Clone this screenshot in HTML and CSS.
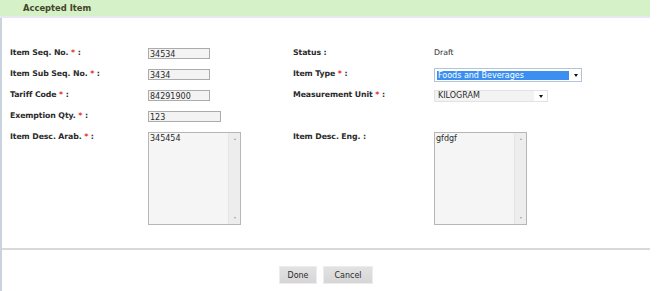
FILE: index.html
```html
<!DOCTYPE html>
<html>
<head>
<meta charset="utf-8">
<link rel="stylesheet" href="styles.css">
</head>
<body>
<div class="page">
  <div class="panel-head">Accepted Item</div>
  <div class="panel-body">
    <div class="form-grid">
      <div class="lbl">Item Seq. No. <span class="req">*</span> :</div>
      <div class="fld"><div class="inp">34534</div></div>
      <div class="lbl">Status :</div>
      <div class="fld"><div class="txt">Draft</div></div>

      <div class="lbl">Item Sub Seq. No. <span class="req">*</span> :</div>
      <div class="fld"><div class="inp">3434</div></div>
      <div class="lbl">Item Type <span class="req">*</span> :</div>
      <div class="fld"><div class="sel sel-type"><span class="sel-hl">Foods and Beverages</span><span class="caret"></span></div></div>

      <div class="lbl">Tariff Code <span class="req">*</span> :</div>
      <div class="fld"><div class="inp">84291900</div></div>
      <div class="lbl">Measurement Unit <span class="req">*</span> :</div>
      <div class="fld"><div class="sel sel-unit"><span class="sel-val">KILOGRAM</span><span class="sel-btn"><span class="caret"></span></span></div></div>

      <div class="lbl">Exemption Qty. <span class="req">*</span> :</div>
      <div class="fld"><div class="inp inp-wide">123</div></div>
      <div class="lbl"></div>
      <div class="fld"></div>

      <div class="lbl">Item Desc. Arab. <span class="req">*</span> :</div>
      <div class="fld">
        <div class="memo"><div class="memo-text">345454</div><div class="memo-bar"><span class="arr-up"></span><span class="arr-dn"></span></div></div>
      </div>
      <div class="lbl">Item Desc. Eng. :</div>
      <div class="fld">
        <div class="memo"><div class="memo-text">gfdgf</div><div class="memo-bar"><span class="arr-up"></span><span class="arr-dn"></span></div></div>
      </div>
    </div>
    <div class="divider"></div>
    <div class="actions">
      <button class="btn btn-done" type="button">Done</button>
      <button class="btn btn-cancel" type="button">Cancel</button>
    </div>
  </div>
</div>
</body>
</html>
```
FILE: styles.css
```css
html, body {
  margin: 0;
  padding: 0;
  background: #ffffff;
}
body {
  font-family: "DejaVu Sans", Verdana, sans-serif;
  color: #333333;
  overflow: hidden;
}
.page {
  width: 650px;
  height: 291px;
  display: flex;
  flex-direction: column;
}
.panel-head {
  height: 16px;
  background: #d5f1c7;
  border-bottom: 2px solid #e8e7f3;
  padding-left: 23px;
  font-size: 8.4px;
  font-weight: bold;
  line-height: 17px;
  color: #45452a;
}
.panel-body {
  flex: 1;
  border-left: 2px solid #c8d3de;
  display: flex;
  flex-direction: column;
}
.form-grid {
  display: grid;
  grid-template-columns: 138px 145px 141px 1fr;
  grid-template-rows: 21px 21px 21px 21px auto;
  padding: 30px 0 0 8px;
}
.lbl {
  font-size: 7.8px;
  font-weight: bold;
  line-height: 9px;
  letter-spacing: -0.1px;
  color: #2b2b2b;
  white-space: nowrap;
}
.req {
  color: #e81c1c;
}
.fld {
  display: flex;
  align-items: flex-start;
}
.txt {
  font-size: 7.8px;
  line-height: 9px;
  color: #2b2b2b;
}
.inp {
  box-sizing: border-box;
  width: 62px;
  height: 11px;
  border: 1px solid #ababab;
  background: #f3f3f3;
  font-size: 8px;
  line-height: 11px;
  padding-left: 1px;
  color: #2b2b2b;
  overflow: hidden;
}
.inp-wide {
  width: 73px;
}
.sel {
  box-sizing: border-box;
  display: flex;
  align-items: center;
  font-size: 8px;
}
.sel-type {
  width: 148px;
  height: 14px;
  margin-top: -1px;
  border: 1px solid #b4c4d8;
  background: #ffffff;
  padding: 0 0 0 2px;
}
.sel-hl {
  width: 131px;
  height: 9px;
  background: #3a8ff0;
  color: #ffffff;
  line-height: 9px;
  padding-left: 1px;
  white-space: nowrap;
}
.sel-type .caret {
  margin-left: 5px;
}
.caret {
  width: 0;
  height: 0;
  border-left: 2.5px solid transparent;
  border-right: 2.5px solid transparent;
  border-top: 3px solid #111111;
}
.sel-unit {
  width: 114px;
  height: 12px;
  border: 1px solid #e2e2e2;
  background: #f3f3f3;
}
.sel-val {
  flex: 1;
  padding-left: 3px;
  line-height: 10px;
  color: #2b2b2b;
}
.sel-btn {
  width: 13px;
  height: 10px;
  background: #ffffff;
  display: flex;
  align-items: center;
  justify-content: center;
}
.memo {
  box-sizing: border-box;
  width: 93px;
  height: 93px;
  border: 1px solid #b6b6b6;
  background: #f5f5f5;
  display: flex;
}
.memo-text {
  flex: 1;
  font-size: 8px;
  line-height: 10px;
  padding: 1px 0 0 1px;
  color: #2b2b2b;
}
.memo-bar {
  width: 11px;
  background: #ededed;
  border-left: 1px solid #e4e4e4;
  display: flex;
  flex-direction: column;
  justify-content: space-between;
  align-items: center;
  padding: 5px 0 5px 0;
}
.arr-up {
  width: 0;
  height: 0;
  border-left: 1.5px solid transparent;
  border-right: 1.5px solid transparent;
  border-bottom: 2px solid #a0a0a0;
}
.arr-dn {
  width: 0;
  height: 0;
  border-left: 1.5px solid transparent;
  border-right: 1.5px solid transparent;
  border-top: 2px solid #a0a0a0;
}
.divider {
  height: 2px;
  background: #d9d9d9;
  margin-top: 23px;
}
.actions {
  display: flex;
  justify-content: center;
  gap: 6px;
  padding-top: 16px;
}
.btn {
  box-sizing: border-box;
  height: 18px;
  border: 1px solid #ececec;
  background: linear-gradient(#e2e2e2, #d6d6d6);
  font-family: "DejaVu Sans", Verdana, sans-serif;
  font-size: 8px;
  color: #2b2b2b;
  padding: 0;
  margin: 0;
}
.btn-done {
  width: 38px;
}
.btn-cancel {
  width: 50px;
}
```
